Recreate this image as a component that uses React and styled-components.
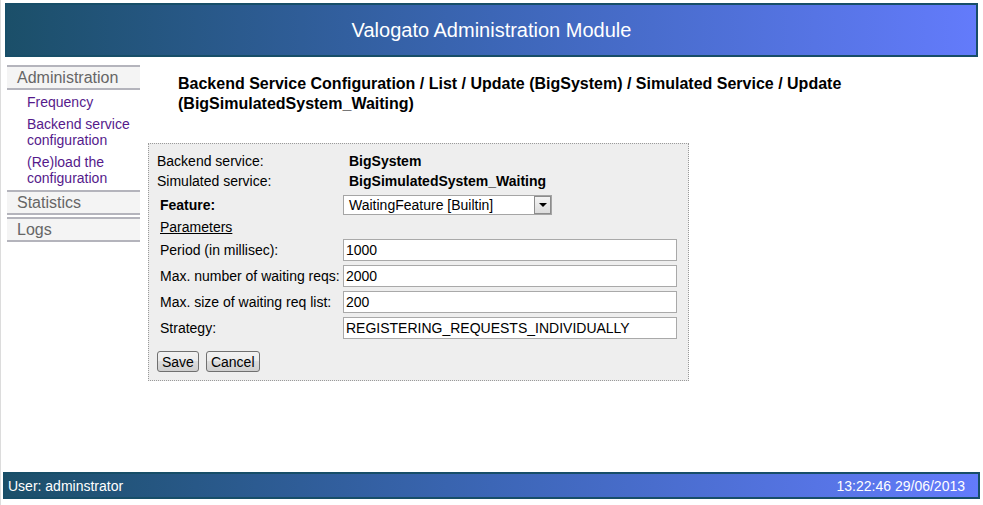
import React from 'react'
import styled, { createGlobalStyle } from 'styled-components'

const GlobalStyle = createGlobalStyle`
  html, body {
    margin: 0;
    padding: 0;
    background: #fff;
  }
  body {
    font-family: "Liberation Sans", Arial, sans-serif;
    font-size: 14px;
    color: #000;
  }
`;

const Page = styled.div`
  height: 505px;
  display: flex;
  flex-direction: column;
  border-left: 1px solid #dcdcdc;
  box-sizing: border-box;
`;

const Header = styled.div`
  margin: 3px 5px 0 4px;
  height: 50px;
  border: 2px solid #174e68;
  background: linear-gradient(to right, #1b4f69, #3c66b6 50%, #637bfb);
  color: #fff;
  font-size: 20px;
  display: flex;
  align-items: center;
  justify-content: center;
`;

const Body = styled.div`
  flex: 1;
  display: flex;
  padding-top: 8px;
`;

const Sidebar = styled.div`
  width: 133px;
  margin-left: 6px;
  display: flex;
  flex-direction: column;
`;

const MenuHead = styled.div`
  border-top: 2px solid #b4b4bc;
  border-bottom: 2px solid #b4b4bc;
  background: #f4f4f4;
  color: #666;
  font-size: 16px;
  line-height: 21px;
  padding-left: 10px;
  margin-top: ${p => p.$gap || 0}px;
`;

const SubMenu = styled.div`
  display: flex;
  flex-direction: column;
  gap: 6px;
  padding: 4px 0 4px 20px;
`;

const SubLink = styled.a`
  color: #551a8b;
  font-size: 14px;
  line-height: 16px;
  text-decoration: none;
  cursor: pointer;
`;

const Content = styled.div`
  flex: 1;
  padding-left: 8px;
`;

const Title = styled.h3`
  margin: 9px 0 29px 0;
  padding-left: 30px;
  padding-right: 120px;
  font-size: 16px;
  line-height: 20px;
  font-weight: bold;
`;

const FormBox = styled.div`
  width: 541px;
  box-sizing: border-box;
  border: 1px dotted #9a9a9a;
  background: #eeeeee;
  padding: 7px 8px 8px 8px;
`;

const InfoGrid = styled.div`
  display: grid;
  grid-template-columns: 192px 1fr;
  grid-auto-rows: 20px;
  align-items: center;
`;

const InfoValue = styled.span`
  font-weight: bold;
`;

const FormGrid = styled.div`
  display: grid;
  grid-template-columns: 183px 1fr;
  row-gap: 4px;
  padding: 0 3px;
  margin-top: 4px;
  align-items: center;
`;

const Label = styled.span`
  font-weight: ${p => (p.$bold ? 'bold' : 'normal')};
  line-height: 16px;
`;

const SectionLink = styled.span`
  grid-column: 1 / span 2;
  text-decoration: underline;
  line-height: 16px;
`;

const Select = styled.div`
  width: 209px;
  height: 20px;
  box-sizing: border-box;
  border: 1px solid #a5a5a5;
  background: #fff;
  display: flex;
  align-items: center;
  justify-content: space-between;
`;

const SelectText = styled.span`
  padding-left: 5px;
`;

const SelectArrow = styled.span`
  width: 17px;
  height: 18px;
  box-sizing: border-box;
  border: 1px solid #8c8c8c;
  background: linear-gradient(#f4f4f4, #dcdcdc);
  display: flex;
  align-items: center;
  justify-content: center;

  &::after {
    content: '';
    border-left: 4px solid transparent;
    border-right: 4px solid transparent;
    border-top: 4px solid #000;
  }
`;

const Input = styled.input`
  width: 100%;
  height: 22px;
  box-sizing: border-box;
  border: 1px solid #a9a9a9;
  padding: 0 2px;
  font-family: "Liberation Sans", Arial, sans-serif;
  font-size: 14px;
  color: #000;
  background: #fff;
  outline: none;
`;

const Buttons = styled.div`
  display: flex;
  gap: 7px;
  margin-top: 12px;
`;

const Button = styled.button`
  height: 21px;
  padding: 0 4px;
  border: 1px solid #707070;
  border-radius: 3px;
  background: linear-gradient(#f2f2f2, #ebebeb 50%, #dddddd 50%, #cfcfcf);
  font-family: "Liberation Sans", Arial, sans-serif;
  font-size: 14px;
  color: #000;
`;

const Footer = styled.div`
  margin: 0 3px 6px 2px;
  height: 23px;
  border: 2px solid #174e68;
  background: linear-gradient(to right, #1b4f69, #3c66b6 50%, #637bfb);
  color: #fff;
  font-size: 14px;
  display: flex;
  align-items: center;
  justify-content: space-between;
  padding: 0 13px 0 3px;
`;

const params = [
  { label: 'Period (in millisec):', value: '1000' },
  { label: 'Max. number of waiting reqs:', value: '2000' },
  { label: 'Max. size of waiting req list:', value: '200' },
  { label: 'Strategy:', value: 'REGISTERING_REQUESTS_INDIVIDUALLY' },
];

export default function App() {
  return (
    <Page>
      <GlobalStyle />
      <Header>Valogato Administration Module</Header>

      <Body>
        <Sidebar>
          <MenuHead>Administration</MenuHead>
          <SubMenu>
            <SubLink>Frequency</SubLink>
            <SubLink>Backend service configuration</SubLink>
            <SubLink>(Re)load the configuration</SubLink>
          </SubMenu>
          <MenuHead>Statistics</MenuHead>
          <MenuHead $gap={2}>Logs</MenuHead>
        </Sidebar>

        <Content>
          <Title>
            Backend Service Configuration / List / Update (BigSystem) / Simulated Service / Update (BigSimulatedSystem_Waiting)
          </Title>

          <FormBox>
            <InfoGrid>
              <span>Backend service:</span>
              <InfoValue>BigSystem</InfoValue>
              <span>Simulated service:</span>
              <InfoValue>BigSimulatedSystem_Waiting</InfoValue>
            </InfoGrid>

            <FormGrid>
              <Label $bold>Feature:</Label>
              <Select>
                <SelectText>WaitingFeature [Builtin]</SelectText>
                <SelectArrow />
              </Select>
              <SectionLink>Parameters</SectionLink>
              {params.map(p => (
                <React.Fragment key={p.label}>
                  <Label>{p.label}</Label>
                  <Input defaultValue={p.value} />
                </React.Fragment>
              ))}
            </FormGrid>

            <Buttons>
              <Button>Save</Button>
              <Button>Cancel</Button>
            </Buttons>
          </FormBox>
        </Content>
      </Body>

      <Footer>
        <span>User: adminstrator</span>
        <span>13:22:46 29/06/2013</span>
      </Footer>
    </Page>
  )
}
